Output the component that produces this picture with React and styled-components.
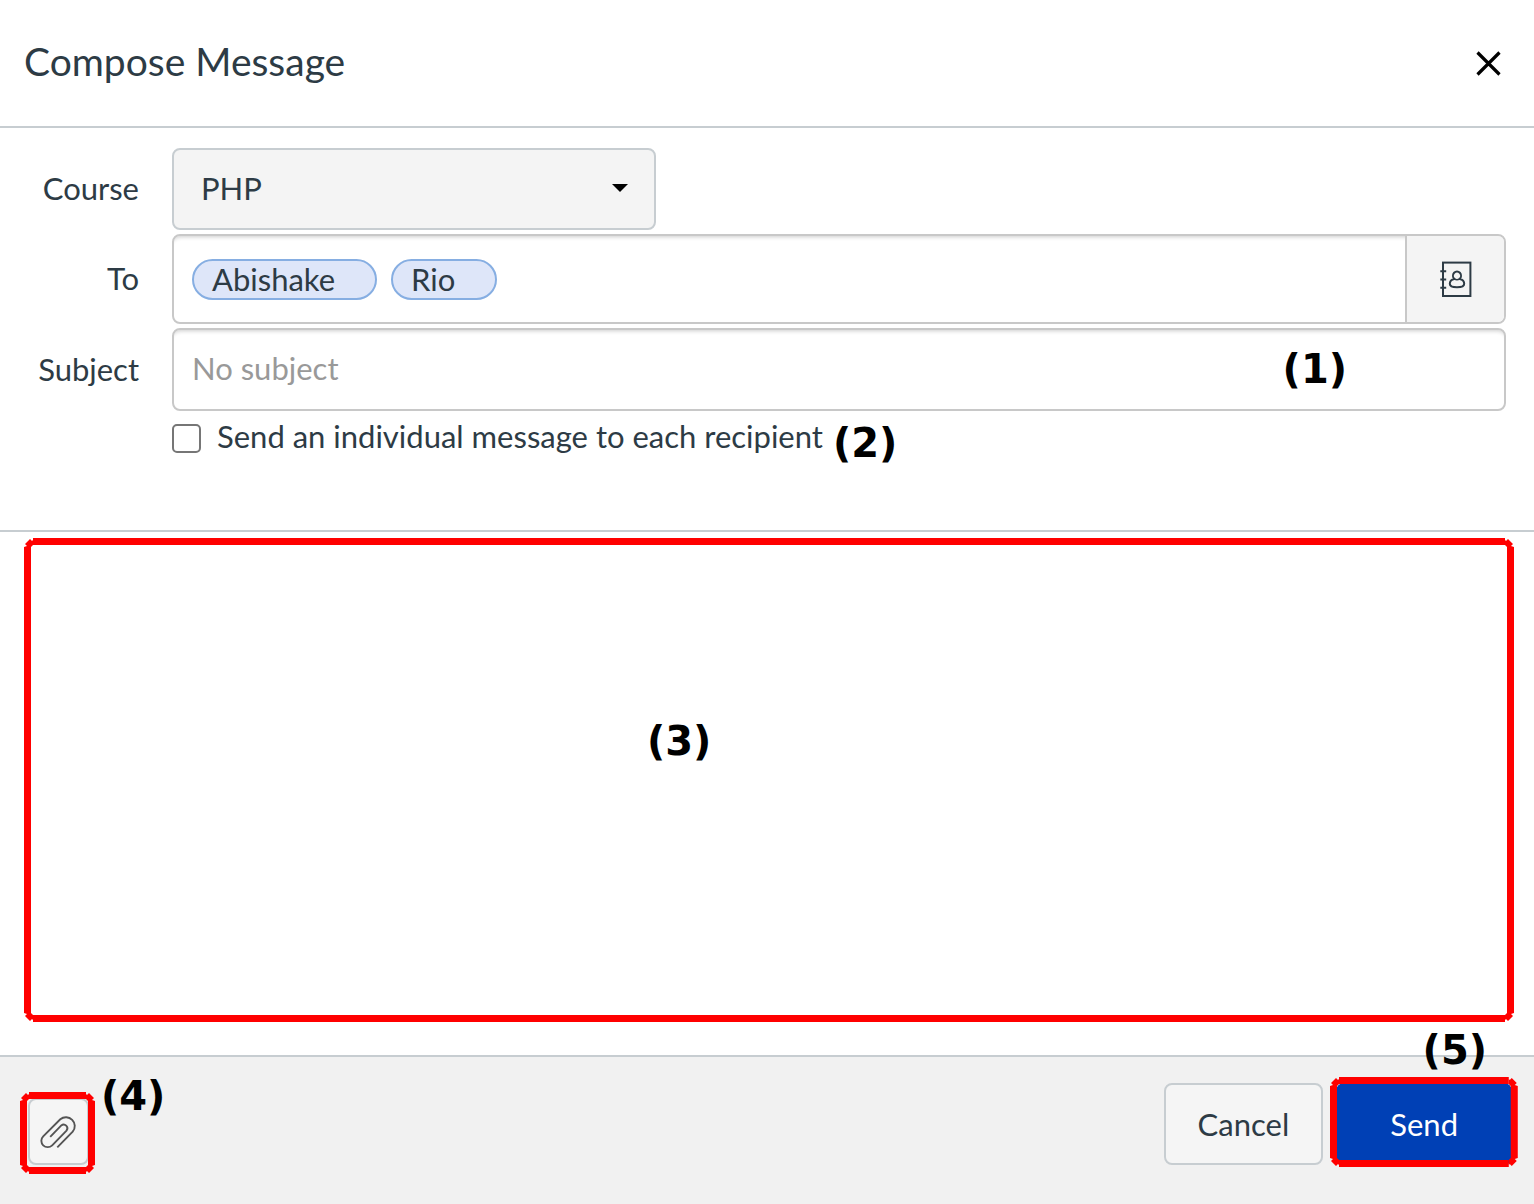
import React from 'react'
import styled, {createGlobalStyle} from 'styled-components';

const App = () => {
  return (
    <Page>
      <GlobalStyle />
      <Header>
        <Title>Compose Message</Title>
        <CloseButton type="button" aria-label="Close">
          <svg width="26" height="26" viewBox="0 0 26 26" fill="none" stroke="#000" strokeWidth="3.2">
            <path d="M1.5 2.5 L23.5 24.5 M23.5 2.5 L1.5 24.5" />
          </svg>
        </CloseButton>
      </Header>

      <Fields>
        <Label htmlFor="course">Course</Label>
        <SelectWrap>
          <Select id="course" defaultValue="PHP">
            <option>PHP</option>
          </Select>
          <Caret width="16" height="8" viewBox="0 0 16 8"><path d="M0 0 H16 L8 8 Z" /></Caret>
        </SelectWrap>

        <Label htmlFor="to">To</Label>
        <Recipients>
          <Chip>Abishake</Chip>
          <Chip>Rio</Chip>
          <RecipientInput id="to" type="text" />
          <BookButton type="button" aria-label="Address book">
            <BookIcon />
          </BookButton>
        </Recipients>

        <Label htmlFor="subject">Subject</Label>
        <SubjectWrap>
          <SubjectInput id="subject" type="text" placeholder="No subject" />
          <Marker $top="17px" $right="159px">(1)</Marker>
        </SubjectWrap>

        <CheckRow>
          <Checkbox id="individual" type="checkbox" />
          <CheckLabel htmlFor="individual">Send an individual message to each recipient</CheckLabel>
          <Marker $top="-5px" $left="661px">(2)</Marker>
        </CheckRow>
      </Fields>

      <MessageSection>
        <MessageWrap>
          <MessageBody aria-label="Message" />
          <Frame />
          <Marker $top="179px" $left="623px">(3)</Marker>
        </MessageWrap>
      </MessageSection>

      <Footer>
        <ButtonWrap>
          <AttachButton type="button" aria-label="Attach">
            <ClipIcon />
          </AttachButton>
          <Frame $inset="-6px -6px -9px -8px" />
          <Marker $top="-26px" $left="73px">(4)</Marker>
        </ButtonWrap>
        <Actions>
          <Button type="button">Cancel</Button>
          <ButtonWrap>
            <Button type="button" $primary>Send</Button>
            <Frame $inset="-6px -6px -2px -6px" />
            <Marker $top="-57px" $right="25px">(5)</Marker>
          </ButtonWrap>
        </Actions>
      </Footer>
    </Page>
  )
}

// hand drawn highlight, the corners are slightly broken
const Frame = ({$inset = '0'}) => (
  <FrameBox $inset={$inset} aria-hidden="true">
    <FrameSvg>
      <Bar $side="top" />
      <Bar $side="bottom" />
      <Bar $side="left" />
      <Bar $side="right" />
      <Corner x="0" y="0" $flip="1, 1" />
      <Corner x="100%" y="0" $flip="-1, 1" />
      <Corner x="0" y="100%" $flip="1, -1" />
      <Corner x="100%" y="100%" $flip="-1, -1" />
    </FrameSvg>
  </FrameBox>
)

const Corner = ({x, y, $flip}) => (
  <svg x={x} y={y} width="1" height="1" overflow="visible">
    <path transform={`scale(${$flip})`} d="M0 9 L3 8 L1 6 L6 1 L8 3 L9 2 L9 7 L7 9 L4 10 L0 9 Z" />
  </svg>
)

const BookIcon = () => (
  <svg width="32" height="36" viewBox="0 0 32 36" fill="none" stroke="#2d3b45" strokeWidth="2">
    <rect x="3" y="1.6" width="27.4" height="33.4" />
    <path d="M0.3 10.3 H6.2 M0.3 18.4 H6.2 M0.3 26.7 H6.2" />
    <path d="M14.3 17.9 A4 4.3 0 1 1 19.7 17.9 C22.5 18.5 24.2 20.6 24.2 22.7 C24.2 25 21 26.2 17 26.2 C13 26.2 9.8 25 9.8 22.7 C9.8 20.6 11.5 18.5 14.3 17.9 Z" />
    <path d="M14.3 17.9 Q17 19.4 19.7 17.9" strokeWidth="1.5" />
  </svg>
)

const ClipIcon = () => (
  <svg width="37" height="34" viewBox="0 0 37 34" fill="none" stroke="#555" strokeWidth="1.9">
    <path d="M17.3 32.3 L32.7 16.7 A8.8 8.8 0 0 0 20.3 4.3 L3.2 21.3 A6.3 6.3 0 0 0 12.2 30.3 L26.5 15.6 A3.7 3.7 0 0 0 21.3 10.4 L10.2 21.8" />
  </svg>
)

const GlobalStyle = createGlobalStyle`
*{
    box-sizing: border-box;
}
body{
    margin: 0;
    font-family: Lato, sans-serif;
    font-size: 31px;
    color: #2d3b45;
    background-color: #fff;
}
button, input, select, textarea{
    font: inherit;
    color: inherit;
    margin: 0;
}
`
const Page = styled.main`
display: flex;
flex-direction: column;
min-height: 100vh;
`
const Header = styled.header`
display: flex;
justify-content: space-between;
align-items: center;
height: 128px;
padding: 0 32px 0 24px;
border-bottom: 2px solid #c7cdd1;
`
const Title = styled.h1`
margin: 0;
padding-bottom: 4px;
font-size: 39px;
font-weight: 400;
line-height: 48px;
`
const CloseButton = styled.button`
display: flex;
padding: 0;
border: none;
background: none;
`
const Fields = styled.form`
display: grid;
grid-template-columns: 139px 1fr;
column-gap: 33px;
row-gap: 4px;
align-items: center;
padding: 20px 28px 77px 0;
border-bottom: 2px solid #c7cdd1;
`
const Label = styled.label`
padding-bottom: 2px;
text-align: right;
line-height: 40px;
`
const SelectWrap = styled.div`
position: relative;
width: 484px;
`
const Select = styled.select`
display: block;
appearance: none;
width: 100%;
height: 82px;
padding: 0 27px 2px;
border: 2px solid #c7cdd1;
border-radius: 8px;
background-color: #f4f4f4;
`
const Caret = styled.svg`
position: absolute;
right: 28px;
top: 36px;
pointer-events: none;
`
const Recipients = styled.div`
display: flex;
align-items: center;
gap: 14px;
height: 90px;
padding-left: 18px;
border: 2px solid #c8c8c8;
border-radius: 8px;
box-shadow: inset 0 5px 4px -4px rgba(0, 0, 0, 0.2);
overflow: hidden;
`
const Chip = styled.span`
padding: 0 40px 0 18px;
border: 2px solid #86aee2;
border-radius: 21px;
background-color: #dee6f9;
line-height: 37px;
`
const RecipientInput = styled.input`
flex: 1;
min-width: 0;
border: none;
outline: none;
background: none;
`
const BookButton = styled.button`
display: flex;
align-items: center;
justify-content: center;
align-self: stretch;
width: 99px;
padding: 0;
border: none;
border-left: 2px solid #c8c8c8;
background-color: #f4f4f4;
`
const SubjectWrap = styled.div`
position: relative;
`
const SubjectInput = styled.input`
display: block;
width: 100%;
height: 83px;
padding: 0 18px 4px;
border: 2px solid #c8c8c8;
border-radius: 8px;
box-shadow: inset 0 5px 4px -4px rgba(0, 0, 0, 0.2);

&::placeholder{
    color: #999;
    opacity: 1;
}
`
const CheckRow = styled.div`
grid-column: 2;
position: relative;
display: flex;
align-items: center;
gap: 16px;
height: 29px;
margin-top: 9px;
`
const Checkbox = styled.input`
appearance: none;
width: 29px;
height: 29px;
border: 2px solid #767676;
border-radius: 5px;
background-color: #fff;
`
const CheckLabel = styled.label`
padding-bottom: 6px;
line-height: 40px;
`
const MessageSection = styled.section`
flex: 1;
display: flex;
padding: 6px 20px 33px 24px;
`
const MessageWrap = styled.div`
position: relative;
flex: 1;
display: flex;
`
const MessageBody = styled.textarea`
flex: 1;
min-height: 200px;
padding: 20px;
border: none;
outline: none;
resize: none;
background: none;
`
const Footer = styled.footer`
display: flex;
justify-content: space-between;
align-items: flex-end;
padding: 26px 22px 39px 28px;
border-top: 2px solid #c7cdd1;
background-color: #f1f1f1;
`
const Actions = styled.div`
display: flex;
gap: 13px;
`
const ButtonWrap = styled.div`
position: relative;
`
const Button = styled.button`
display: block;
height: 82px;
padding: 0 ${props => props.$primary ? '52px' : '32px'};
border: 2px solid ${props => props.$primary ? '#0040b5' : '#c7cdd1'};
border-radius: 8px;
background-color: ${props => props.$primary ? '#0040b5' : '#f5f5f5'};
color: ${props => props.$primary ? '#fff' : '#2d3b45'};
`
const AttachButton = styled.button`
display: flex;
align-items: center;
justify-content: center;
width: 61px;
height: 67px;
padding: 0;
border: 2px solid #c7cdd1;
border-radius: 8px;
background-color: #f5f5f5;
`
const Marker = styled.span`
position: absolute;
top: ${props => props.$top};
left: ${props => props.$left || 'auto'};
right: ${props => props.$right || 'auto'};
font-family: "DejaVu Sans", sans-serif;
font-size: 40px;
font-weight: 700;
line-height: 48px;
color: #000;
pointer-events: none;
`
const FrameBox = styled.span`
position: absolute;
inset: ${props => props.$inset};
pointer-events: none;
`
const FrameSvg = styled.svg`
display: block;
width: 100%;
height: 100%;
overflow: visible;
fill: #ff0000;
`
const Bar = styled.rect`
x: ${props => props.$side === 'right' ? 'calc(100% - 7px)' : props.$side === 'left' ? '0px' : '9px'};
y: ${props => props.$side === 'bottom' ? 'calc(100% - 7px)' : props.$side === 'top' ? '0px' : '9px'};
width: ${props => props.$side === 'left' || props.$side === 'right' ? '7px' : 'calc(100% - 18px)'};
height: ${props => props.$side === 'left' || props.$side === 'right' ? 'calc(100% - 18px)' : '7px'};
`


export default App
